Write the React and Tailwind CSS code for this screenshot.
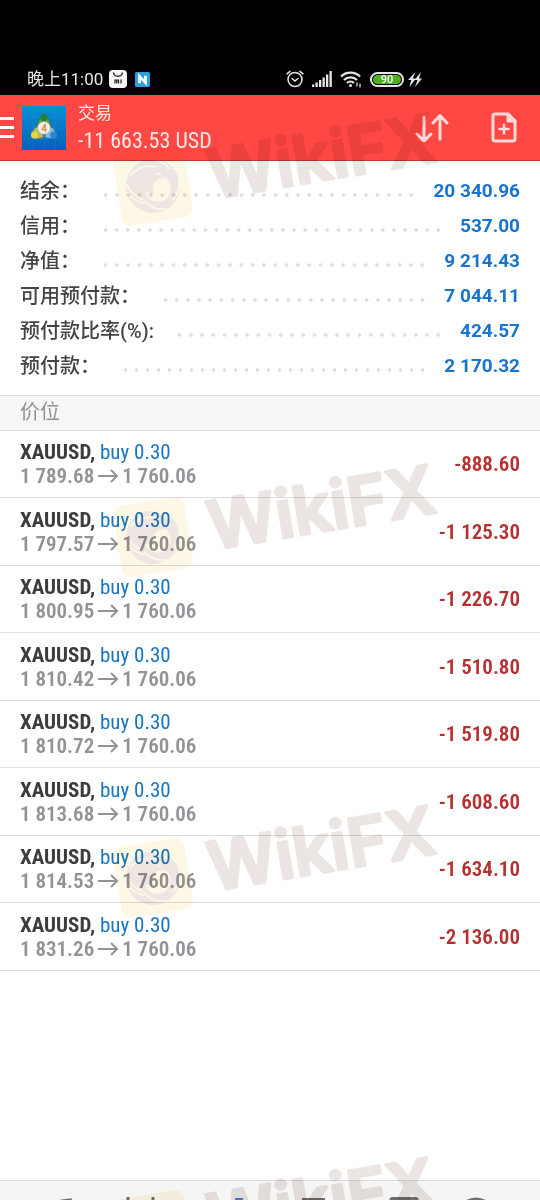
const summary = [
  { label: "结余：", value: "20 340.96" },
  { label: "信用：", value: "537.00" },
  { label: "净值：", value: "9 214.43" },
  { label: "可用预付款：", value: "7 044.11" },
  { label: "预付款比率(%):", value: "424.57" },
  { label: "预付款：", value: "2 170.32" },
]

const positions = [
  { open: "1 789.68", profit: "-888.60" },
  { open: "1 797.57", profit: "-1 125.30" },
  { open: "1 800.95", profit: "-1 226.70" },
  { open: "1 810.42", profit: "-1 510.80" },
  { open: "1 810.72", profit: "-1 519.80" },
  { open: "1 813.68", profit: "-1 608.60" },
  { open: "1 814.53", profit: "-1 634.10" },
  { open: "1 831.26", profit: "-2 136.00" },
]

function StatusBar() {
  return (
    <div className="h-[95px] bg-black text-[#e6e6e6] flex items-end justify-between pl-[27px] pr-[118px] pb-1">
      <div className="flex items-center gap-2 h-6">
        <span className="text-[17px] leading-6 -mr-0.5">晚上11:00</span>
        <svg width="18" height="18" viewBox="0 0 18 18">
          <rect width="18" height="18" rx="4" fill="#f4f4f4" />
          <path d="M4.500 2.500c.6 5 8.400 5 9 0" fill="none" stroke="#222" strokeWidth="1.300" />
          <path d="M6 13.500v-3.500h3.500v3.500M7.800 10.500v3M12 9.500v4" fill="none" stroke="#222" strokeWidth="1.200" />
        </svg>
        <svg width="15" height="15" viewBox="0 0 14 14">
          <rect width="14" height="14" rx="1.500" fill="#2f9fe0" />
          <path d="M4.200 10.500V4l5.600 6V3.500" fill="none" stroke="#fff" strokeWidth="2.500" />
        </svg>
      </div>
      <div className="flex items-center gap-2 h-6">
        <svg width="18" height="18" viewBox="0 0 18 18" fill="none" stroke="#e6e6e6" strokeWidth="1.500" strokeLinecap="round">
          <circle cx="9" cy="9.500" r="7" />
          <path d="M1 3.800 4 1.300M17 3.800 14 1.300M6 8.500l3 2.500 3-2.500" />
        </svg>
        <svg width="20" height="16" viewBox="0 0 20 16" fill="#e6e6e6">
          <path d="M0 13.500h2.300V16H0zM3.500 11.500h2.300V16H3.500zM7 9h2.300v7H7zM10.500 6.500h2.300V16h-2.300zM14 3.500h2.300V16H14zM17.500 0h2.300v16h-2.300z" />
        </svg>
        <svg width="22" height="17" viewBox="0 0 22 17" fill="none" stroke="#e6e6e6" strokeWidth="2.200">
          <path d="M1 5.500C6 .300 15 .300 20 5.500M4 9c3.500-3.600 9.500-3.600 13 0M7 12c2-2 5-2 7 0" />
          <circle cx="10.500" cy="14.500" r="1.500" fill="#e6e6e6" stroke="none" />
          <path d="M17 11.500v4M20 12.500v4" strokeWidth="1.200" />
        </svg>
        <span className="w-[34px] h-[15px] rounded-full border-2 border-[#e6e6e6] p-px flex">
          <span className="flex-1 rounded-full bg-[#4caf1e] text-white text-[11px] leading-[10px] font-medium text-center">90</span>
        </span>
        <svg className="-ml-1" width="14" height="15" viewBox="0 0 14 15" fill="#e6e6e6">
          <path d="M7.500 0 0 8h3.300L1.300 15 8 6.600H4.700zM13 0 6.500 8h3L7 15l7-8.500h-3z" />
        </svg>
      </div>
    </div>
  )
}

function AppIcon() {
  return (
    <svg width="44" height="44" viewBox="0 0 44 44">
      <defs>
        <linearGradient id="sky" x1="0" y1="0" x2="0" y2="1">
          <stop offset="0" stopColor="#0a90d8" />
          <stop offset="1" stopColor="#0560b8" />
        </linearGradient>
      </defs>
      <rect width="44" height="44" fill="url(#sky)" />
      <path d="M0 11h44M0 22h44M0 33h44M11 0v44M22 0v44M33 0v44" stroke="#2793d6" strokeWidth=".5" opacity=".5" />
      <path d="M19 12c-3 2-4 6-4 10l7-3 7 3c0-4-1-8-4-10z" fill="#5fa557" stroke="#28703a" />
      <circle cx="22" cy="11.500" r="3.800" fill="#257f3d" />
      <path d="M14 21c-3 3-5 7-4.500 10 4 2 8 2 12 0l-3-8z" fill="#b9bf58" stroke="#7f8d3a" />
      <circle cx="12.500" cy="29" r="3.500" fill="#e6d34a" />
      <path d="M30 21c3 3 5 7 4.500 10-4 2-8 2-12 0l3-8z" fill="#7cc0e6" stroke="#2471ac" />
      <circle cx="31.500" cy="29" r="3.500" fill="#2f86cc" />
      <circle cx="22" cy="22" r="6.200" fill="#f5efe6" stroke="#c9bfae" strokeWidth=".8" />
      <text x="22" y="25.500" textAnchor="middle" fontSize="10" fontWeight="700" fill="#dc8e52">4</text>
    </svg>
  )
}

function Header() {
  return (
    <header className="h-[66px] bg-[#ff4743] border-b border-[#b93a37] text-[#ffe9e8] flex items-center">
      <button aria-label="Menu" className="w-[14px] h-[21px] flex flex-col justify-between">
        <span className="w-full h-[3px] bg-white"></span>
        <span className="w-full h-[3px] bg-white"></span>
        <span className="w-full h-[3px] bg-white"></span>
      </button>
      <div className="ml-2">
        <AppIcon />
      </div>
      <div className="ml-3 pt-0.5 flex-1">
        <p className="text-[17px] leading-6">交易</p>
        <h1 className="font-['Roboto_Condensed','Liberation_Sans_Narrow',Roboto,'Noto_Sans_CJK_SC',sans-serif] text-[22px] leading-8">-11 663.53 USD</h1>
      </div>
      <button aria-label="Sort" className="mr-[42px]">
        <svg width="34" height="28" viewBox="0 0 34 28" fill="none" stroke="#ffd9d8" strokeWidth="3" strokeLinecap="round" strokeLinejoin="round">
          <path d="M9 3v24M2 20l7 7 7-7M25 25V1.500M18 9l7-7.500L32 9" />
        </svg>
      </button>
      <button aria-label="New order" className="mr-[23px]">
        <svg width="26" height="31" viewBox="0 0 26 31" fill="none" stroke="#ffd9d8" strokeWidth="3" strokeLinecap="round" strokeLinejoin="round">
          <path d="M4 2h13l7 7v18a2 2 0 0 1-2 2H4a2 2 0 0 1-2-2V4a2 2 0 0 1 2-2z" />
          <path d="M17 2v7h7z" fill="#ffd9d8" />
          <path d="M13 12.500v9M8.500 17h9" strokeWidth="2.500" />
        </svg>
      </button>
    </header>
  )
}

function Watermark({ className }) {
  return (
    <svg aria-hidden="true" className={`absolute left-[110px] overflow-visible mix-blend-multiply pointer-events-none ${className}`} width="360" height="150" viewBox="0 0 360 150">
      <g transform="rotate(-9 43 86)">
        <rect x="7" y="50" width="72" height="72" rx="9" fill="#fdf7e5" />
        {/* eagle head inside a shutter ring */}
        <circle cx="43" cy="86" r="27" fill="#ede6e3" />
        <path d="M37 84c4-8 14-10 20-4 5 6 4 15-2 20-7 5-16 2-20-5-1-4 0-8 2-11z" fill="#fdf7e5" />
        <path d="M21 74c9-7 20-9 28-5 5 2 9 6 10 13-4-3-9-3-12-1-4 3-6 7-4 13-8-1-16-8-22-20z" fill="#ede6e3" />
        <path d="M48 75q3-1 5 1" stroke="#fdf7e5" strokeWidth="1.500" fill="none" />
        <path d="M36 58c10 0 20 4 27 14M70 82c0 9-4 16-10 21M54 111c-9 0-17-4-22-12M17 80c2 8 7 14 14 18M16 88c3 6 8 11 16 14M22 72c8-6 18-8 27-4" stroke="#fdf7e5" strokeWidth="2" fill="none" />
      </g>
      <text
        transform="translate(102 99) rotate(-9.500)"
        fontFamily="Inter, sans-serif"
        fontSize="67"
        fontWeight="600"
        fill="#ebe5e3"
        stroke="#ebe5e3"
        strokeWidth="3"
        strokeLinejoin="round"
      >
        WikiFX
      </text>
    </svg>
  )
}

function App() {
  return (
    <div className="relative min-h-screen overflow-hidden bg-white flex flex-col font-[Roboto,'Noto_Sans_CJK_SC',sans-serif]">
      <StatusBar />
      <Header />

      <main className="flex-1">
        {/* Account summary */}
        <dl className="pt-3 pb-3 px-5">
          {summary.map((row) => (
            <div key={row.label} className="h-[35px] flex items-center">
              <dt className="text-xl text-[#444] font-medium">{row.label}</dt>
              <div className="flex-1 h-1 ml-5 mr-4 translate-y-1 bg-[radial-gradient(circle,#dedede_1.5px,transparent_2px)] bg-[length:11px_4px] [background-repeat:space_no-repeat]"></div>
              <dd className="text-[19px] leading-7 pt-px text-[#1875cf] font-bold">{row.value}</dd>
            </div>
          ))}
        </dl>

        <h2 className="h-9 px-5 bg-[#f6f6f6] border-y border-[#dedede] text-xl leading-8 text-[#929296]">价位</h2>

        {/* Open positions */}
        <ul className="font-['Roboto_Condensed','Liberation_Sans_Narrow',Roboto,'Noto_Sans_CJK_SC',sans-serif]">
          {positions.map((p) => (
            <li key={p.open} className="odd:h-[67px] even:h-[68px] px-5 border-b border-[#dedede] flex items-center justify-between">
              <div className="text-[21px] leading-6">
                <p className="text-[#1875c4]">
                  <b className="text-[#3c3c3c]">XAUUSD,</b> buy 0.30
                </p>
                <p className="text-[#939397] font-semibold flex items-center gap-[3px]">
                  {p.open}
                  <svg width="22" height="14" viewBox="0 0 22 14" fill="none" stroke="#939397" strokeWidth="2">
                    <path d="M1 7h19M14 1l6 6-6 6" />
                  </svg>
                  1 760.06
                </p>
              </div>
              <span className="text-[21px] leading-6 font-semibold text-[#b53030]">{p.profit}</span>
            </li>
          ))}
        </ul>
      </main>

      {/* Bottom tabs, only their tops are visible */}
      <nav className="h-5 overflow-hidden bg-[#f5f5f5] border-t border-[#dcdcdc]">
        <svg className="w-full" height="20" viewBox="0 0 540 20" fill="none" stroke="#6e6e6e" strokeWidth="3">
          <path d="M60 19.500 71 18v2" strokeWidth="1.500" />
          <path d="M128 16v5M153 16v5" />
          <path d="M235 18.500h8" stroke="#4a86c8" />
          <path d="M302 18.500h23" />
          <path d="M391 21v-2q0-1.500 1.500-1.500h23q1.500 0 1.500 1.500v2" />
          <path d="M464 22q12-8 24 0" />
        </svg>
      </nav>

      <Watermark className="top-[100px]" />
      <Watermark className="top-[451px]" />
      <Watermark className="top-[792px]" />
      <Watermark className="top-[1144px]" />
    </div>
  )
}

export default App
